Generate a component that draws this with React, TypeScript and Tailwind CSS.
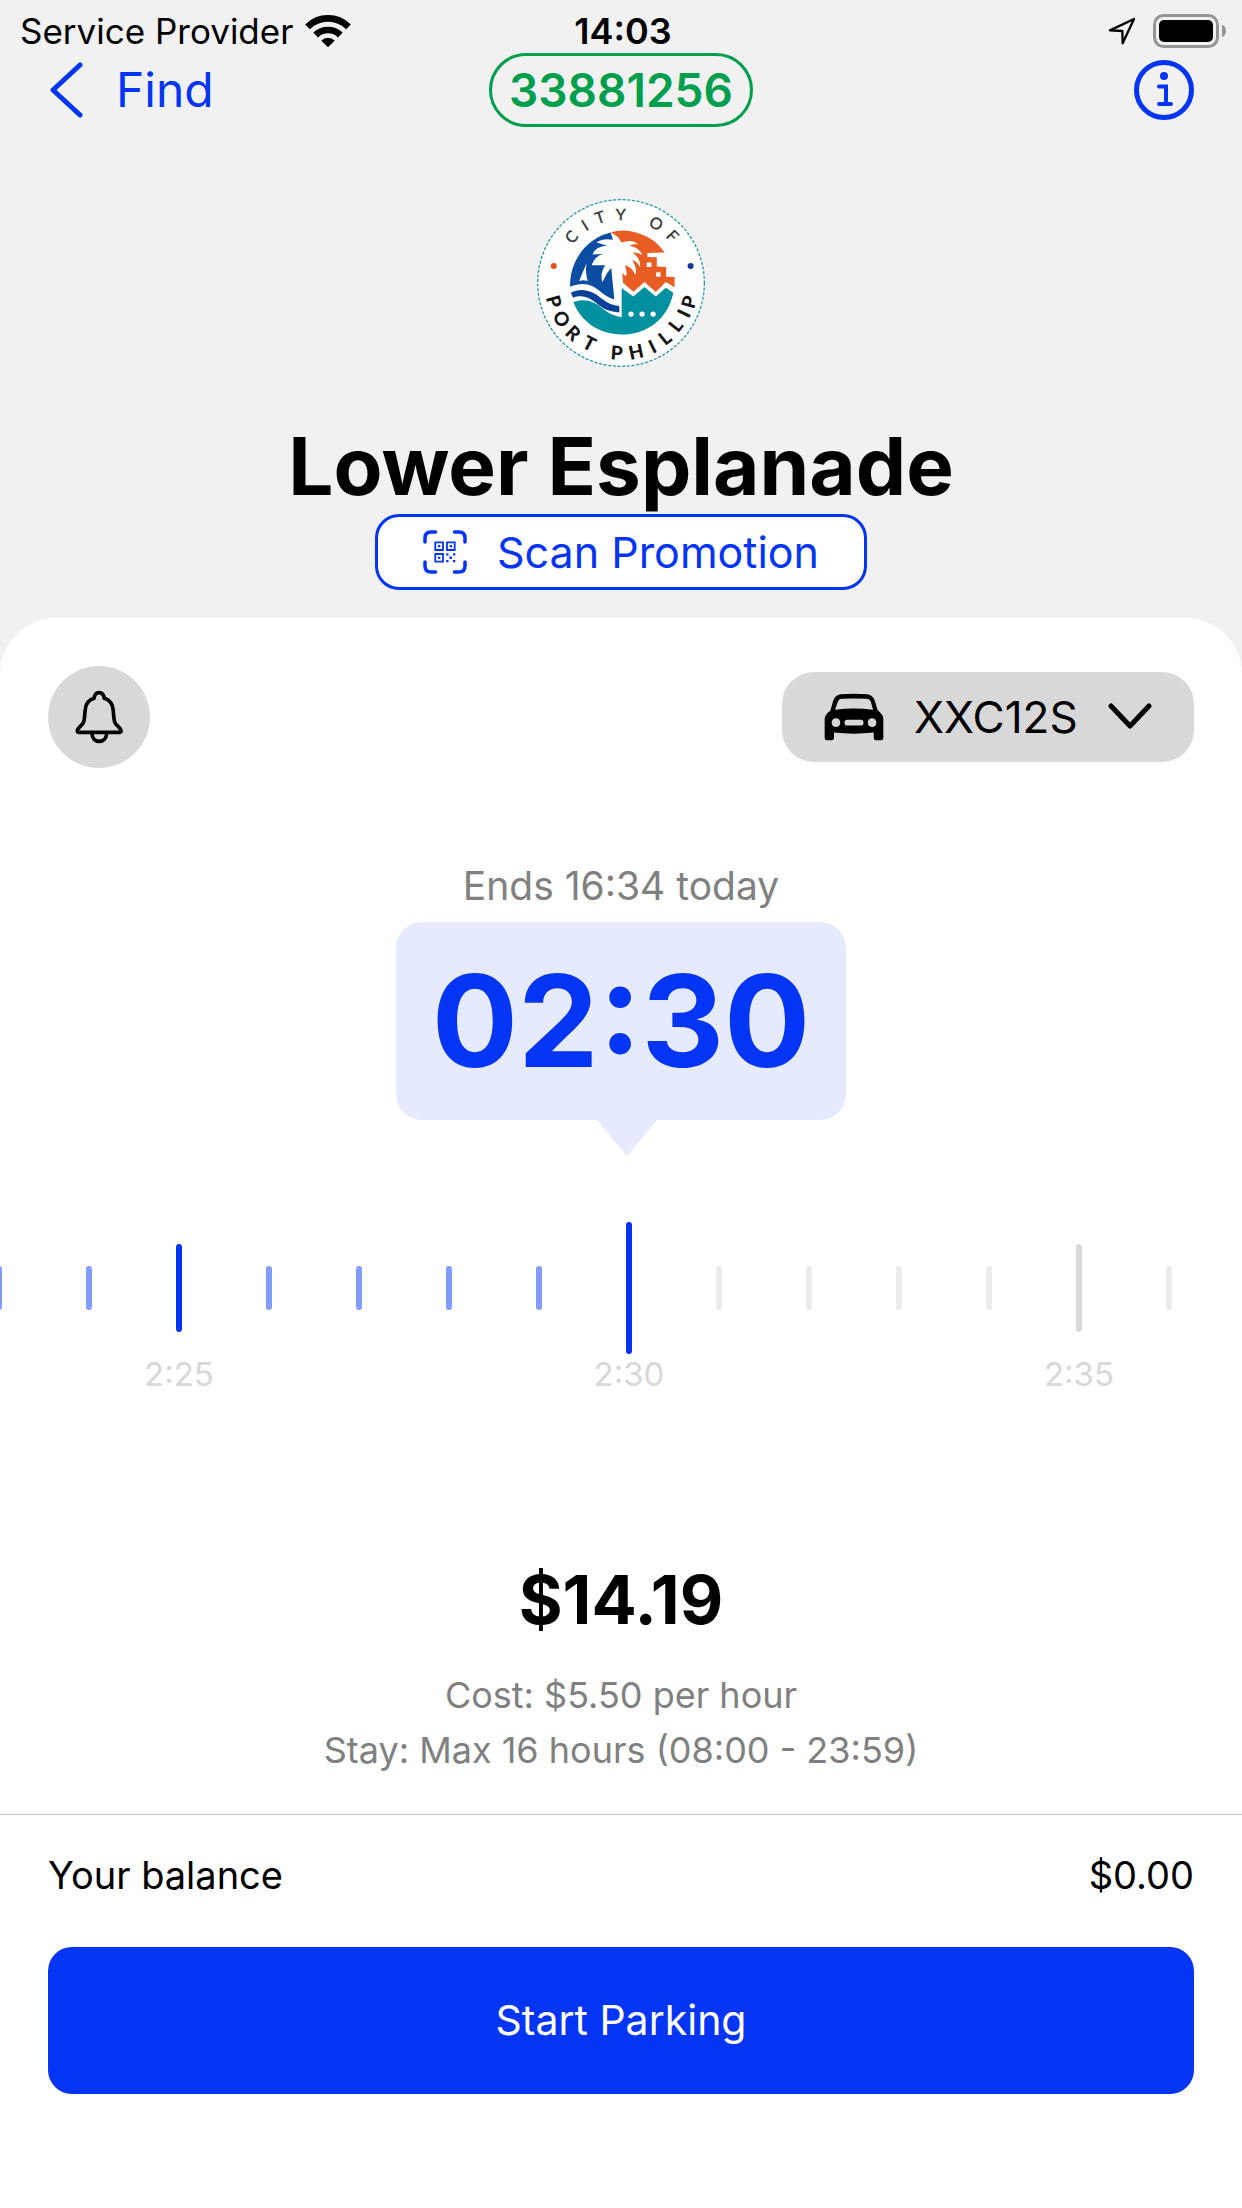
import { useState } from "react";

const TICK_OFFSETS = [-7, -6, -5, -4, -3, -2, -1, 0, 1, 2, 3, 4, 5, 6, 7];

// Letters placed round the rim of the council badge: char, x, y, rotation
const BADGE_TOP: [string, number, number, number][] = [
  ["C", 155, 155, -47],
  ["I", 195, 120, -32],
  ["T", 240, 97, -18],
  ["Y", 302, 87, 0],
  ["O", 408, 115, 30],
  ["F", 457, 152, 47],
];

const BADGE_BOTTOM: [string, number, number, number][] = [
  ["P", 102, 348, 75],
  ["O", 125, 400, 59],
  ["R", 160, 443, 44],
  ["T", 208, 474, 28],
  ["P", 290, 502, 4],
  ["H", 348, 499, -12],
  ["I", 397, 483, -26],
  ["L", 434, 457, -39],
  ["L", 467, 420, -52],
  ["I", 491, 384, -64],
  ["P", 507, 350, -74],
];

function formatTime(minutes: number) {
  return `${Math.floor(minutes / 60)}:${String(minutes % 60).padStart(2, "0")}`;
}

function WifiIcon() {
  return (
    <svg className="h-[34px] w-[46px]" viewBox="930 38 138 102" fill="none" stroke="black" strokeWidth="20">
      <path d="M937.5 76.5A87 87 0 0 1 1060.5 76.5" />
      <path d="M962 101A53 53 0 0 1 1036 101" />
      <path d="M999 138L979 118A28 28 0 0 1 1019 118Z" fill="black" stroke="none" />
    </svg>
  );
}

function LocationIcon() {
  return (
    <svg className="h-7 w-7" viewBox="144 51 84 84" fill="none" stroke="black" strokeWidth="7" strokeLinejoin="round">
      <path d="M222 57L150 91L187 93L188 130Z" />
    </svg>
  );
}

function BatteryIcon() {
  return (
    <svg className="h-[34px] w-[73px]" viewBox="0 0 73 34">
      <rect x="1.5" y="1.5" width="63" height="31" rx="9" fill="none" stroke="#959595" strokeWidth="3" />
      <rect x="6" y="6" width="54" height="22" rx="5" fill="black" />
      <path d="M69 11C71.500 11.500 73 14 73 17S71.500 22.500 69 23Z" fill="#959595" />
    </svg>
  );
}

function CouncilBadge() {
  return (
    <svg className="size-[168px]" viewBox="52 42 502 502" role="img" aria-label="City of Port Phillip">
      <circle cx="303" cy="293" r="249" fill="white" stroke="#2a9aa5" strokeWidth="4" strokeDasharray="9 5" />
      <path
        fill="#0b4da2"
        d="M272 142C202 158 149 225 151 304C190 288 218 297 243 320C256 331 268 338 283 342L274 248L262 262L247 291Q240 262 256 240L215 240Q224 214 248 206L218 208Q226 184 262 182L230 172Q250 158 279 164Z"
      />
      <path fill="white" d="M200 234L178 287Q190 283 204 287Q195 262 200 234Z" />
      <path
        fill="#e85d24"
        d="M272 142Q300 133 332 138C376 146 412 168 433 202L382 203V215L410 216V244L438 245V274L463 275V306L437 290L407 320L373 290L340 319L309 292L307 262Q320 280 320 263L315 240Q335 245 346 268Q352 248 336 224Q352 228 360 246Q362 220 338 202Q356 202 366 210Q360 188 328 182Q344 174 354 178Q340 160 304 172Q296 152 272 142Z"
      />
      <path fill="white" d="M380 232H394V245H380ZM408 261H421V274H408Z" />
      <path
        fill="#0a409a"
        d="M153 322C188 304 220 318 246 340C263 354 280 360 298 362V381C270 380 248 370 229 353C207 335 186 327 160 337Z"
      />
      <path
        fill="#0090a0"
        d="M305 308L340 333L373 305L407 333L437 307L459 322C446 395 385 447 306 447C236 447 180 405 161 350C200 337 226 350 254 374C272 388 288 392 305 395Z"
      />
      <g fill="white">
        <circle cx="333" cy="386" r="8" />
        <circle cx="366" cy="386" r="8" />
        <circle cx="399" cy="386" r="8" />
      </g>
      <circle cx="102" cy="242" r="9" fill="#e8501e" />
      <circle cx="511" cy="242" r="9" fill="#11389a" />
      <g fontFamily="Lato, sans-serif" fontSize="48" fill="#333" stroke="#333" textAnchor="middle">
        {BADGE_TOP.map(([char, x, y, angle], i) => (
          <text key={i} transform={`translate(${x} ${y}) rotate(${angle})`} y="17">
            {char}
          </text>
        ))}
      </g>
      <g fontFamily="Lato, sans-serif" fontSize="57" fontWeight="900" fill="#151515" textAnchor="middle">
        {BADGE_BOTTOM.map(([char, x, y, angle], i) => (
          <text key={i} transform={`translate(${x} ${y}) rotate(${angle})`} y="20">
            {char}
          </text>
        ))}
      </g>
    </svg>
  );
}

function ScanIcon() {
  return (
    <svg className="size-11" viewBox="0 0 44 44" fill="none" stroke="currentColor">
      <g strokeWidth="3.500" strokeLinecap="round">
        <path d="M2 12V8Q2 2 8 2H12.500M31.500 2H36Q42 2 42 8V12M42 32V36Q42 42 36 42H31.500M12.500 42H8Q2 42 2 36V32" />
      </g>
      <path strokeWidth="1.800" d="M12.300 12.300H20V20H12.300ZM24 12.300H31.700V20H24ZM12.300 24H20V31.700H12.300Z" />
      <path
        fill="currentColor"
        stroke="none"
        d="M15 15H17.300V17.300H15ZM26.700 15H29V17.300H26.700ZM15 26.700H17.300V29H15ZM23.200 23.200H25.500V25.500H23.200ZM30 23.200H32.300V25.500H30ZM26.500 26.500H29V29H26.500ZM23.200 30H25.500V32.300H23.200ZM30 30H32.300V32.300H30Z"
      />
    </svg>
  );
}

function BellIcon() {
  return (
    <svg className="h-[54px] w-12" viewBox="226 270 144 162" fill="none" stroke="black" strokeWidth="11" strokeLinejoin="round">
      <path d="M283 295C285 284 290 278 298 278C306 278 312 284 314 295C329 300 338 311 340 326C343 345 341 360 347 370C352 378 364 384 364 393Q364 397 359 397H238Q233 397 233 393C233 384 245 378 250 370C256 360 254 345 257 326C259 311 268 300 283 295Z" />
      <path d="M277 399C277 415 286 424 298.500 424S321 415 321 399" />
    </svg>
  );
}

function CarIcon() {
  return (
    <svg className="h-12 w-[60px]" viewBox="190 161 181 144">
      <path
        fillRule="evenodd"
        d="M192 240Q192 226 209 214L218 183Q224 166 240 164Q280 161 321 164Q337 166 343 183L352 213Q369 226 369 240V296Q369 303 362 303H347Q340 303 340 296V280Q280 287 220 280V296Q220 303 213 303H199Q192 303 192 296ZM223 211L232 186Q235 178 242 178Q280 176 319 178Q328 178 331 186L338 211Q280 204 223 211Z"
      />
      <g fill="#d8d8d8">
        <circle cx="226" cy="250" r="13" />
        <circle cx="335" cy="250" r="13" />
        <rect x="252" y="241" width="57" height="18" rx="8" />
      </g>
    </svg>
  );
}

function Tick({ minute, offset }: { minute: number; offset: number }) {
  const major = minute % 5 === 0;
  const past = offset < 0;

  let bar = past ? "h-11 bg-[#819bfa]" : "h-11 bg-[#ebebeb]";
  if (major) bar = past ? "h-[88px] bg-[#0435f5]" : "h-[88px] bg-[#d8d8d8]";
  if (offset === 0) bar = "h-[132px] bg-[#0435f5]";

  return (
    <div className="flex w-[90px] shrink-0 flex-col items-center">
      <div className="flex h-[132px] items-center">
        <div className={`w-1.5 rounded-full ${bar}`} />
      </div>
      <span className="h-10 text-[33px] leading-10 whitespace-nowrap text-[#d8d8d8]">
        {major ? formatTime(minute) : ""}
      </span>
    </div>
  );
}

export default function App() {
  const [duration, setDuration] = useState(150);

  return (
    <main className="flex min-h-screen flex-col bg-[#f1f1f1] font-['Inter',sans-serif] text-black">
      {/* Status bar */}
      <div className="grid h-[53px] grid-cols-[1fr_auto_1fr] items-center pt-2 pr-4 pl-5 text-4xl leading-10">
        <div className="flex items-center gap-3">
          <span className="text-[35px]">Service Provider</span>
          <WifiIcon />
        </div>
        <span className="font-semibold">14:03</span>
        <div className="flex items-center justify-end gap-[17px]">
          <LocationIcon />
          <BatteryIcon />
        </div>
      </div>

      {/* Navigation */}
      <nav className="grid grid-cols-[1fr_auto_1fr] items-center px-12">
        <a href="#find" className="flex items-center gap-8 text-5xl text-[#0435f5]">
          <svg className="h-14 w-9" viewBox="0 0 36 56" fill="none" stroke="currentColor" strokeWidth="5" strokeLinecap="round" strokeLinejoin="round">
            <path d="M32 3L5 28L32 53" />
          </svg>
          Find
        </a>
        <span className="flex h-[74px] items-center rounded-full border-3 border-[#009f4d] px-[17px] text-[46px] leading-none font-semibold text-[#009f4d]">
          33881256
        </span>
        <button type="button" aria-label="Information" className="justify-self-end text-[#0435f5]">
          <svg className="size-[60px]" viewBox="0 0 60 60" fill="none" stroke="currentColor" strokeWidth="4">
            <circle cx="30" cy="30" r="27.500" strokeWidth="5" />
            <circle cx="30" cy="16" r="4" fill="currentColor" stroke="none" />
            <path d="M25 26.500H32V44M25 44H37" strokeLinecap="round" />
          </svg>
        </button>
      </nav>

      {/* Location */}
      <header className="flex flex-col items-center pt-[72px] pb-7">
        <CouncilBadge />
        <h1 className="mt-[51px] text-[80px] leading-[96px] font-bold">Lower Esplanade</h1>
        <button
          type="button"
          className="flex h-[76px] items-center gap-[30px] rounded-3xl border-3 border-[#0435f5] bg-white px-[45px] text-[43px] leading-none text-[#0435f5]"
        >
          <ScanIcon />
          Scan Promotion
        </button>
      </header>

      <section className="flex flex-1 flex-col rounded-t-[56px] bg-white">
        {/* Reminder and vehicle */}
        <div className="flex items-center justify-between px-12 pt-12">
          <button type="button" aria-label="Reminders" className="flex size-[102px] items-center justify-center rounded-full bg-[#d8d8d8]">
            <BellIcon />
          </button>
          <label className="flex h-[90px] items-center gap-[30px] rounded-[32px] bg-[#d8d8d8] px-[42px]">
            <CarIcon />
            <select aria-label="Vehicle" className="appearance-none bg-transparent text-[44px] leading-none">
              <option>XXC12S</option>
            </select>
            <svg className="h-7 w-11" viewBox="0 0 44 28" fill="none" stroke="black" strokeWidth="5" strokeLinecap="round" strokeLinejoin="round">
              <path d="M3 3L22 23L41 3" />
            </svg>
          </label>
        </div>

        {/* Duration */}
        <div className="mt-[94px] flex flex-col items-center">
          <p className="mb-3 text-[39px] leading-12 text-[#808080]">Ends 16:34 today</p>
          <div className="flex h-[198px] items-center rounded-[26px] bg-[#e6eafe] px-9 text-[128px] leading-none font-bold text-[#0435f5]">
            {formatTime(duration).padStart(5, "0")}
          </div>
          <svg className="ml-3 h-9 w-[60px]" viewBox="0 0 60 36" fill="#e6eafe">
            <path d="M0 0H60L30 36Z" />
          </svg>
        </div>

        <div className="relative mt-[66px] overflow-hidden">
          <div className="flex justify-center pl-4">
            {TICK_OFFSETS.map((offset) => (
              <Tick key={offset} offset={offset} minute={duration + offset} />
            ))}
          </div>
          <input
            type="range"
            aria-label="Parking duration"
            min={10}
            max={960}
            value={duration}
            onChange={(e) => setDuration(Number(e.target.value))}
            className="absolute inset-0 h-full w-full opacity-0"
          />
        </div>

        {/* Price */}
        <div className="mt-[166px] flex flex-col items-center pb-9 text-center">
          <p className="mb-7 text-[67px] leading-20 font-bold">$14.19</p>
          <p className="text-4xl leading-[55px] text-[#808080]">Cost: $5.50 per hour</p>
          <p className="text-4xl leading-[55px] text-[#808080]">Stay: Max 16 hours (08:00 - 23:59)</p>
        </div>

        {/* Checkout */}
        <footer className="border-t border-[#c4c4c4] px-12 pt-9 pb-28">
          <div className="flex justify-between text-[38px] leading-12">
            <span>Your balance</span>
            <span>$0.00</span>
          </div>
          <button type="button" className="mt-12 h-[147px] w-full rounded-3xl bg-[#0435f5] text-[41px] text-white">
            Start Parking
          </button>
        </footer>
      </section>
    </main>
  );
}
